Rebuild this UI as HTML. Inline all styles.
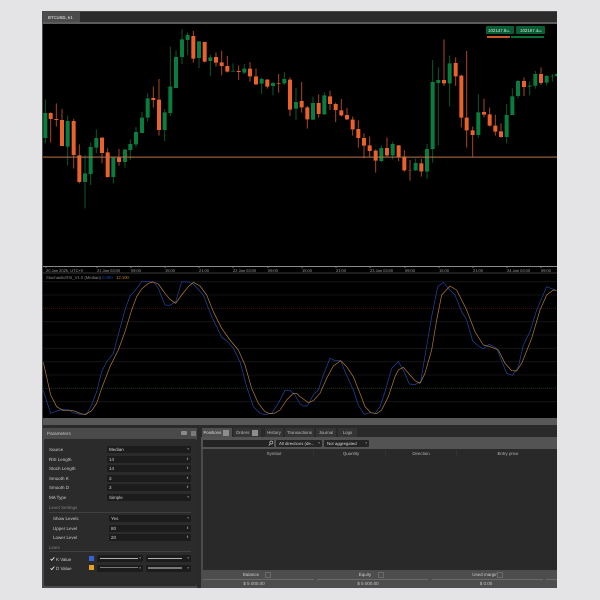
<!DOCTYPE html>
<html><head><meta charset="utf-8"><style>
html,body{margin:0;padding:0;width:600px;height:600px;overflow:hidden;background:#e4e4e6}
body{position:relative;font-family:"Liberation Sans",sans-serif;color:#bbb;text-rendering:geometricPrecision}
#w{left:0;top:0;width:600px;height:600px;background:#e4e4e6;filter:blur(.3px)}
div{position:absolute;box-sizing:border-box}
.t{font-size:4.2px;line-height:7px;white-space:nowrap;color:#b5b5b5}
.ax{top:267px;font-size:4px;color:#a0a0a0}
.l{left:49px;font-size:4.5px;line-height:7px;color:#c8c8c8;white-space:nowrap}
.b{background:#1c1c1c;height:7px;border-radius:1px;font-size:4.5px;line-height:7px;padding-left:2px;color:#d0d0d0;white-space:nowrap}
.b i{position:absolute;right:2px;top:0;font-style:normal;font-size:3.5px;color:#888}
.tab{top:428px;height:9px;background:#343434;font-size:4.4px;line-height:9px;text-align:center;color:#b8b8b8;white-space:nowrap}
.h{top:450px;font-size:4.4px;line-height:7px;color:#b0b0b0;text-align:center;white-space:nowrap}
.f{font-size:4.5px;line-height:7px;color:#c8c8c8;text-align:center;white-space:nowrap}
</style></head><body><div id="w">
<div style="left:42px;top:11px;width:515px;height:577px;background:#4a4a4a"></div>
<div style="left:43px;top:12px;width:514px;height:10px;background:#2b2b2b"></div>
<div style="left:43px;top:12px;width:37px;height:10px;background:#4c4c4c"></div>
<div class="t" style="left:48px;top:13.5px;color:#c8c8c8;font-weight:bold;font-size:4.2px">BTCUSD, h1</div>
<div style="left:43px;top:22px;width:514px;height:2px;background:#5c5c5c"></div>
<div style="left:43px;top:24px;width:514px;height:394px;background:#000"></div>

<svg width="600" height="600" viewBox="0 0 600 600" style="position:absolute;left:0;top:0">
<defs><clipPath id="c"><rect x="43" y="24" width="514" height="394"/></clipPath></defs>
<g clip-path="url(#c)">
<rect x="43" y="266" width="514" height="1" fill="#8a8a8a"/>
<rect x="43" y="272.5" width="514" height="1" fill="#3a3a3a"/>
<path d="M43 281.7H557M43 295H557M43 321.7H557M43 335H557M43 348.3H557M43 361.7H557M43 375H557M43 401.7H557" stroke="#181818" stroke-width=".8" fill="none"/>
<path d="M43 308.3H557" stroke="#4a1616" stroke-width=".8" stroke-dasharray="1 1" fill="none"/>
<path d="M43 388.3H557" stroke="#183c1a" stroke-width=".8" stroke-dasharray="1 1" fill="none"/>

<g transform="translate(30 0) scale(.33333)" fill="none">
<path stroke="#0a7d3e" stroke-width="3" opacity=".72" d="M46 298V430M113 347V497M165 466V625M182 428V555M199 388V460M250 473V551M285 447V503M301 418V480M318 381V442M336 336V400M353 280V365M404 327V423M421 140V348M438 152V265M456 88V192M473 97V165M507 123V204M541 163V228M609 190V215M643 192V222M695 233V282M729 245V286M763 216V255M798 264V360"/>
<path stroke="#ea612c" stroke-width="3" opacity=".72" d="M62 337V428M79 310V380M96 327V438M131 357V506M148 433V550M216 412V490M233 445V533M267 447V497M370 260V323M387 237V407M490 93V188M524 125V187M558 158V200M575 152V226M592 168V218M626 197V240M660 186V245M678 206V255M712 237V266M746 222V278M780 232V348"/>
<path stroke="#0a7d3e" stroke-width="12" d="M46 339V414M113 363V440M165 520V546M182 441V522M199 414V443M250 473V531M285 449V486M301 432V450M318 396V433M336 353V399M353 295V353M404 337V390M421 260V339M438 171V264M456 118V171M473 105V120M507 124V174M541 172V183M609 213V215M643 206V218M695 237V251M729 249V258M763 237V250M798 306V326"/>
<path stroke="#ea612c" stroke-width="12" d="M62 339V357M79 357V360M96 360V438M131 363V465M148 466V546M216 413V459M233 457V531M267 473V486M370 294V300M387 299V390M490 108V176M524 126V185M558 171V188M575 187V198M592 198V215M626 213V216M660 206V229M678 229V253M712 239V260M746 249V251M780 239V329"/>
</g>
<g transform="translate(300 0) scale(.33333)" fill="none">
<path stroke="#0a7d3e" stroke-width="3" opacity=".72" d="M39 290V360M73 277V345M244 436V487M278 425V478M347 475V513M381 432V536M398 180V488M415 202V436M449 167V320M535 283V413M620 312V431M637 265V345M654 240V295M689 245V286M706 213V266M740 225V257M757 222V245M770 220V230"/>
<path stroke="#ea612c" stroke-width="3" opacity=".72" d="M5 246V338M22 318V386M56 283V353M90 272V330M107 308V366M124 297V350M141 324V360M158 350V407M175 361V443M192 400V475M209 410V470M227 448V518M261 412V470M296 435V483M313 450V515M330 480V542M364 477V530M432 118V258M467 172V258M484 224V382M500 153V443M518 380V470M552 296V352M569 323V380M586 344V407M603 370V413M672 232V288M723 202V255"/>
<path stroke="#0a7d3e" stroke-width="12" d="M39 309V359M73 286V343M244 444V483M278 432V466M347 489V511M381 447V515M398 246V447M415 240V249M449 190V250M535 337V405M620 345V411M637 289V345M654 243V288M689 257V260M706 222V257M740 228V248M757 230V231M770 222V228"/>
<path stroke="#ea612c" stroke-width="12" d="M5 303V322M22 322V358M56 309V342M90 289V312M107 312V330M124 331V346M141 345V358M158 359V388M175 387V414M192 414V437M209 436V453M227 452V482M261 444V466M296 436V472M313 470V511M330 511V512M364 490V514M432 240V250M467 189V229M484 227V353M500 353V391M518 391V405M552 336V344M569 343V377M586 377V395M603 394V411M672 243V261M723 222V249"/>
</g>
<rect x="43" y="156.6" width="514" height="1" fill="#b9744c"/>

<g transform="translate(30 260) scale(.33333)" fill="none" stroke-width="2" stroke-linejoin="round">
<polyline stroke="#2547a8" points="10,330 40,393 62,460 80,453 100,448 115,449 130,458 150,463 170,462 185,435 200,395 215,335 230,305 250,280 270,205 285,150 300,108 315,92 335,65 370,65 385,85 405,135 420,136 437,125 455,65 475,66 490,72 520,105 545,170 560,200 575,232 590,242 610,265 630,305 650,380 670,440 690,460 705,464 725,460 745,430 765,391 780,391 795,405 810,432"/>
<polyline stroke="#b9813a" points="40,307 62,405 80,440 100,452 130,452 150,460 165,464 185,452 200,430 215,385 240,320 265,270 285,215 305,150 320,110 335,87 355,70 370,66 385,72 405,100 420,118 437,130 455,105 475,80 490,67 510,78 530,105 550,155 575,205 600,240 625,270 645,315 665,385 685,430 705,455 720,461 735,459 750,450 770,420 790,400 800,400 810,410"/>
</g>
<g transform="translate(300 260) scale(.33333)" fill="none" stroke-width="2" stroke-linejoin="round">
<polyline stroke="#2547a8" points="0,432 10,438 22,438 40,405 55,390 70,345 90,295 105,302 122,302 135,335 160,390 175,435 192,463 210,458 225,460 240,440 255,395 275,325 295,305 310,330 328,372 345,374 362,365 378,270 395,170 413,80 430,67 445,85 465,105 485,155 500,180 518,243 535,258 550,266 568,253 590,265 620,340 637,346 655,320 670,255 690,215 710,150 740,80 760,88 770,92"/>
<polyline stroke="#b9813a" points="0,410 25,428 40,422 60,400 80,355 100,318 122,302 140,320 160,350 180,400 195,440 212,458 230,461 245,450 265,410 285,350 295,330 310,322 330,345 345,362 360,370 375,340 395,270 410,180 425,105 450,78 470,90 500,150 525,215 550,255 570,260 595,270 615,310 635,332 650,333 665,310 695,235 720,150 740,105 760,90 770,91"/>
</g>
<path d="M46 266v2M97 266v2M131 266v2M165 266v2M199 266v2M233 266v2M268 266v2M302 266v2M336 266v2M370 266v2M405 266v2M439 266v2M473 266v2M507 266v2M541 266v2" stroke="#8a8a8a" stroke-width=".8"/>
</g>
</svg>

<div class="t ax" style="left:46px">20 Jan 2025, UTC+0</div>
<div class="t ax" style="left:97px">21 Jan 03:00</div>
<div class="t ax" style="left:131px">09:00</div>
<div class="t ax" style="left:165px">15:00</div>
<div class="t ax" style="left:199px">21:00</div>
<div class="t ax" style="left:233px">22 Jan 03:00</div>
<div class="t ax" style="left:268px">09:00</div>
<div class="t ax" style="left:302px">15:00</div>
<div class="t ax" style="left:336px">21:00</div>
<div class="t ax" style="left:370px">23 Jan 03:00</div>
<div class="t ax" style="left:405px">09:00</div>
<div class="t ax" style="left:439px">15:00</div>
<div class="t ax" style="left:473px">21:00</div>
<div class="t ax" style="left:507px">24 Jan 03:00</div>
<div class="t ax" style="left:541px">09:00</div>
<div class="t" style="left:46px;top:274px;color:#8c8c8c">StochasticRSI_V1.0 (Median) <span style="color:#2b55c8">0.000</span> &nbsp; <span style="color:#d8902a">12.100</span></div>

<div style="left:486px;top:26px;width:28px;height:8px;background:#0a5c34;border-radius:1px"></div>
<div style="left:516px;top:26px;width:29px;height:8px;background:#0a5c34;border-radius:1px"></div>
<div class="t" style="left:488px;top:26.5px;color:#cfe8da;font-size:4.4px">102147.8<span style="font-size:3px">us</span></div>
<div class="t" style="left:520px;top:26.5px;color:#cfe8da;font-size:4.4px">102167.4<span style="font-size:3px">us</span></div>
<div style="left:487px;top:36px;width:23px;height:2px;background:#c9572c"></div>
<div style="left:511px;top:36px;width:33px;height:2px;background:#0a7038"></div>

<div style="left:43px;top:418px;width:514px;height:7px;background:#585858"></div>
<div style="left:43px;top:425px;width:514px;height:3px;background:#2a2a2a"></div>

<!-- Parameters -->
<div style="left:43px;top:428px;width:154px;height:160px;background:#4a4a4a"></div>
<div class="t" style="left:47px;top:430px;font-size:4.6px;color:#c8c8c8">Parameters</div>
<div style="left:181px;top:431px;width:6px;height:4px;background:#8a8a8a;border-radius:1px"></div>
<div style="left:191px;top:431px;width:5px;height:5px;background:#7a7a7a"></div>
<div style="left:44px;top:439px;width:153px;height:147px;background:#2b2b2b;border-radius:2px"></div>

<div class="l" style="top:446px">Source</div><div class="b" style="left:107px;top:446px;width:84px">Median<i>▾</i></div>
<div class="l" style="top:455.5px">RSI Length</div><div class="b" style="left:107px;top:455.5px;width:84px">14<i>⬍</i></div>
<div class="l" style="top:465px">Stoch Length</div><div class="b" style="left:107px;top:465px;width:84px">14<i>⬍</i></div>
<div class="l" style="top:474.5px">Smooth K</div><div class="b" style="left:107px;top:474.5px;width:84px">3<i>⬍</i></div>
<div class="l" style="top:484px">Smooth D</div><div class="b" style="left:107px;top:484px;width:84px">3<i>⬍</i></div>
<div class="l" style="top:493.5px">MA Type</div><div class="b" style="left:107px;top:493.5px;width:84px">Simple<i>▾</i></div>

<div class="l" style="top:504px;left:49px;color:#808080">Level Settings</div>
<div style="left:49px;top:511.5px;width:142px;height:1px;background:#3f3f3f"></div>
<div class="l" style="top:515px;left:53px">Show Levels</div><div class="b" style="left:109px;top:515px;width:82px">Yes<i>▾</i></div>
<div class="l" style="top:524.5px;left:53px">Upper Level</div><div class="b" style="left:109px;top:524.5px;width:82px">80<i>⬍</i></div>
<div class="l" style="top:534px;left:53px">Lower Level</div><div class="b" style="left:109px;top:534px;width:82px">20<i>⬍</i></div>

<div class="l" style="top:544px;left:49px;color:#808080">Lines</div>
<div style="left:49px;top:551px;width:142px;height:1px;background:#3f3f3f"></div>
<svg width="600" height="600" style="position:absolute;left:0;top:0"><path d="M50.5 559l1.3 1.3 2.5-3M50.5 568.3l1.3 1.3 2.5-3" stroke="#ddd" stroke-width=".9" fill="none"/></svg>
<div class="l" style="top:555.5px;left:56px">K Value</div>
<div class="l" style="top:564.5px;left:56px">D Value</div>
<div style="left:89px;top:556px;width:5px;height:5px;background:#3a62d8"></div>
<div style="left:89px;top:565px;width:5px;height:5px;background:#e8a020"></div>
<div class="b" style="left:97px;top:555px;width:46px"><i>▾</i></div>
<div class="b" style="left:146px;top:555px;width:45px"><i>▾</i></div>
<div class="b" style="left:97px;top:564.5px;width:46px"><i>▾</i></div>
<div class="b" style="left:146px;top:564.5px;width:45px"><i>▾</i></div>
<div style="left:100px;top:558px;width:38px;height:1px;background:#b0b0b0"></div>
<div style="left:148px;top:558px;width:34px;height:1px;background:#b0b0b0"></div>
<div style="left:100px;top:567px;width:38px;height:1px;background:#777"></div>
<div style="left:148px;top:567px;width:34px;height:1.5px;background:#777"></div>
<div style="left:197px;top:428px;width:4px;height:160px;background:#2a2a2a"></div>

<!-- Right panel -->
<div style="left:201px;top:428px;width:356px;height:9px;background:#2a2a2a"></div>
<div class="tab" style="left:202px;width:30px;background:#4f4f4f;text-align:left;padding-left:1.5px;color:#d8d8d8">Positions</div>
<div style="left:223px;top:430px;width:6px;height:6px;background:#8d8d8d"></div>
<div class="tab" style="left:234px;width:27px;text-align:left;padding-left:2px">Orders</div>
<div style="left:252px;top:430px;width:6px;height:6px;background:#8d8d8d"></div>
<div class="tab" style="left:265px;width:18px">History</div>
<div class="tab" style="left:285px;width:29px">Transactions</div>
<div class="tab" style="left:316px;width:20px">Journal</div>
<div class="tab" style="left:338px;width:19px">Logs</div>
<div style="left:201px;top:437px;width:356px;height:12px;background:#535353"></div>
<div style="left:203px;top:440px;width:71px;height:7px;background:#242424"></div>
<svg width="600" height="600" style="position:absolute;left:0;top:0"><circle cx="271.3" cy="442.5" r="1.5" stroke="#bbb" stroke-width=".7" fill="none"/><path d="M270.3 443.7l-1.5 1.8" stroke="#bbb" stroke-width=".8"/></svg>
<div class="b" style="left:276px;top:440px;width:46px;background:#242424;padding-left:3px;font-size:4.3px">All directions (de...<i>▾</i></div>
<div class="b" style="left:324px;top:440px;width:45px;background:#242424;padding-left:3px;font-size:4.3px">Not aggregated<i>▾</i></div>
<div style="left:203px;top:449px;width:354px;height:121px;background:#292929"></div>
<div class="h" style="left:234px;width:80px">Symbol</div>
<div class="h" style="left:311px;width:80px">Quantity</div>
<div class="h" style="left:381px;width:80px">Direction</div>
<div class="h" style="left:468px;width:80px">Entry price</div>
<div style="left:313px;top:450px;width:1px;height:7px;background:#333"></div>
<div style="left:385px;top:450px;width:1px;height:7px;background:#333"></div>
<div style="left:456px;top:450px;width:1px;height:7px;background:#333"></div>
<div style="left:201px;top:570px;width:356px;height:18px;background:#4d4d4d"></div>
<div style="left:203px;top:579px;width:111px;height:.8px;background:#6a6a6a"></div>
<div style="left:317px;top:579px;width:111px;height:.8px;background:#6a6a6a"></div>
<div style="left:432px;top:579px;width:111px;height:.8px;background:#6a6a6a"></div>
<div style="left:546px;top:579px;width:11px;height:.8px;background:#6a6a6a"></div>
<div class="f" style="left:216px;top:571px;width:70px">Balance</div>
<div class="f" style="left:330px;top:571px;width:70px">Equity</div>
<div class="f" style="left:450px;top:571px;width:70px">Used margin</div>
<div style="left:265px;top:572px;width:6px;height:6px;border:.6px solid #6a6a6a"></div>
<div style="left:378px;top:572px;width:6px;height:6px;border:.6px solid #6a6a6a"></div>
<div style="left:497px;top:572px;width:6px;height:6px;border:.6px solid #6a6a6a"></div>
<div class="f" style="left:219px;top:579.5px;width:70px">$ 5 000.00</div>
<div class="f" style="left:333px;top:579.5px;width:70px">$ 5 000.00</div>
<div class="f" style="left:451px;top:579.5px;width:70px">$ 0.00</div>
</div></body></html>
